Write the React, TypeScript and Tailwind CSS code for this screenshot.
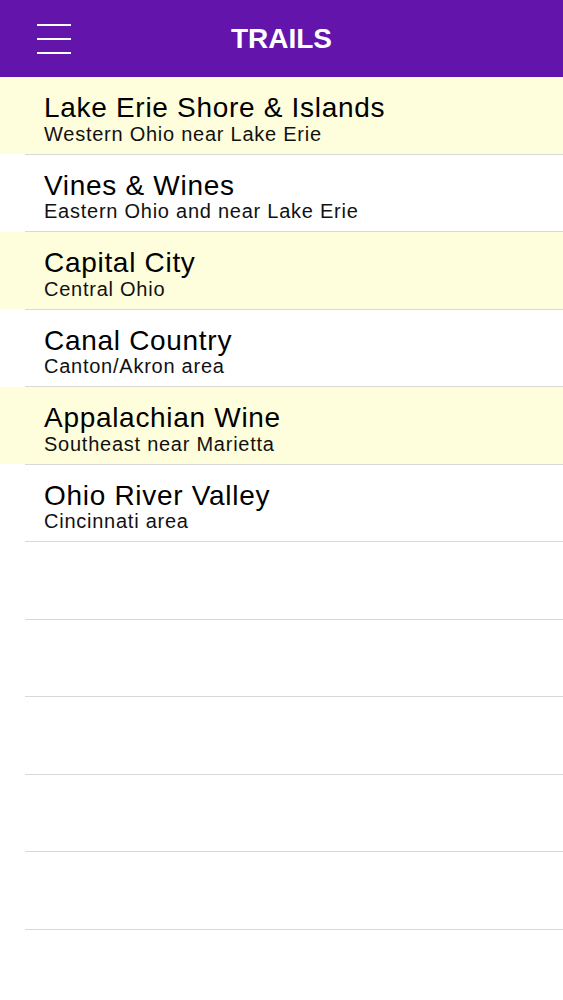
import React from "react";

const trails = [
  { name: "Lake Erie Shore & Islands", sub: "Western Ohio near Lake Erie" },
  { name: "Vines & Wines", sub: "Eastern Ohio and near Lake Erie" },
  { name: "Capital City", sub: "Central Ohio" },
  { name: "Canal Country", sub: "Canton/Akron area" },
  { name: "Appalachian Wine", sub: "Southeast near Marietta" },
  { name: "Ohio River Valley", sub: "Cincinnati area" },
];

export default function App() {
  const empties = [0, 1, 2, 3, 4];
  return (
    <div
      className="w-[563px] min-h-[1000px] bg-white"
      style={{ fontFamily: '"Liberation Sans", Arial, sans-serif' }}
    >
      <header className="h-[77px] bg-[#6315ab] flex items-center relative">
        <button className="ml-[37px] w-[34px] h-[30px] flex flex-col justify-between" aria-label="menu">
          <span className="block h-[2px] w-full bg-white"></span>
          <span className="block h-[2px] w-full bg-white"></span>
          <span className="block h-[2px] w-full bg-white"></span>
        </button>
        <h1 className="absolute left-0 right-0 text-center text-white font-bold text-[28px] leading-none pointer-events-none">
          TRAILS
        </h1>
      </header>
      <div className="flex flex-col">
        {trails.map((t, i) => (
          <div key={t.name} className="flex flex-col h-[77.5px]">
            <div
              className={`flex-1 pl-[44px] pt-[17px] ${i % 2 === 0 ? "bg-[#fefedc]" : "bg-white"}`}
            >
              <div className="text-[28px] leading-[28px] tracking-[0.7px] text-black">{t.name}</div>
              <div className="text-[20px] leading-[20px] mt-[1.5px] tracking-[0.75px] text-[#111]">{t.sub}</div>
            </div>
            <div className="ml-[25px] h-px bg-[#d8d8d8]"></div>
          </div>
        ))}
        {empties.map((e) => (
          <div key={e} className="flex flex-col h-[77.5px]">
            <div className="flex-1"></div>
            <div className="ml-[25px] h-px bg-[#d8d8d8]"></div>
          </div>
        ))}
      </div>
    </div>
  );
}
